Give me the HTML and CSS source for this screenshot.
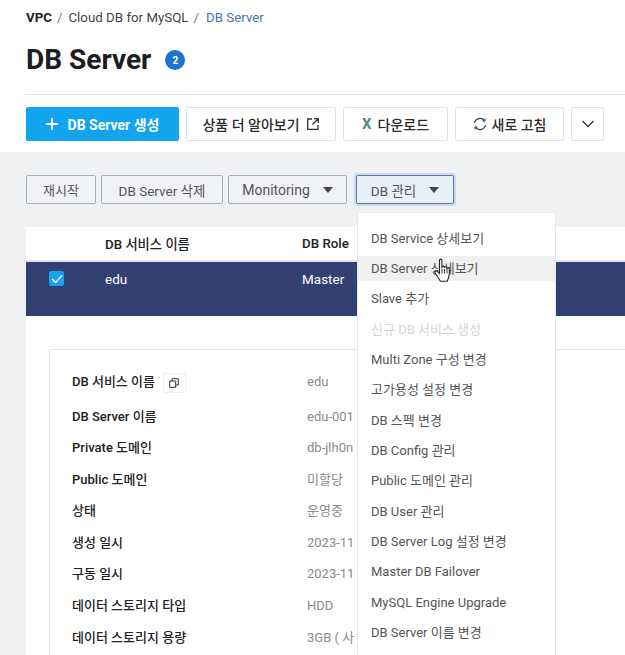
FILE: index.html
```html
<!DOCTYPE html>
<html lang="ko">
<head>
<meta charset="utf-8">
<title>DB Server</title>
<link rel="stylesheet" href="styles.css">
</head>
<body>
<header class="head">
  <nav class="crumbs">
    <b class="crumb-root">VPC</b><span class="sep">/</span><span>Cloud DB for MySQL</span><span class="sep">/</span><span class="crumb-now">DB Server</span>
  </nav>
  <div class="title-row">
    <h1 class="title">DB Server</h1>
    <span class="count">2</span>
  </div>
  <div class="actions">
    <button class="btn primary">
      <svg width="12" height="12" viewBox="0 0 12 12"><path d="M6 0v12M0 6h12" stroke="#fff" stroke-width="1.8" fill="none"/></svg>
      DB Server 생성</button>
    <button class="btn learn">상품 더 알아보기
      <svg width="14" height="14" viewBox="0 0 14 14" fill="none" stroke="#333" stroke-width="1.3"><path d="M6 2H1.700v10.300H12V8M8 1.700h4.300V6M12.200 1.800 6.500 7.500"/></svg>
    </button>
    <button class="btn down"><span class="x-mark">X</span>다운로드</button>
    <button class="btn refresh">
      <svg width="14" height="14" viewBox="0 0 14 14" fill="none" stroke="#333" stroke-width="1.2"><path d="M1.600 6A5.500 5.500 0 0 1 11.400 3.600M12.400 8A5.500 5.500 0 0 1 2.600 10.400"/><path d="M12 1.500v2.600H9.600M2 12.500V9.900h2.400" stroke-width="1"/></svg>
      새로 고침</button>
    <button class="btn more">
      <svg width="14" height="8" viewBox="0 0 14 8" fill="none" stroke="#333" stroke-width="1.3"><path d="M1.500 1 7 6.500 12.500 1"/></svg>
    </button>
  </div>
</header>
<main class="content">
  <div class="tools">
    <button class="tool t-restart">재시작</button>
    <button class="tool t-delete">DB Server 삭제</button>
    <button class="tool t-mon">Monitoring<i class="caret"></i></button>
    <button class="tool t-db">DB 관리<i class="caret"></i></button>
  </div>
  <section class="panel">
    <div class="thead">
      <span></span><span>DB 서비스 이름</span><span>DB Role</span>
    </div>
    <div class="trow">
      <span class="check"><svg width="12" height="10" viewBox="0 0 12 10" fill="none" stroke="#fff" stroke-width="1.400"><path d="M1 5l3.600 3.600L11 1.400"/></svg></span>
      <span>edu</span><span>Master</span>
    </div>
    <div class="detail-wrap">
      <dl class="detail">
        <div class="d-row first"><dt>DB 서비스 이름<span class="copy"><svg width="10" height="10" viewBox="0 0 10 10" fill="none" stroke="#333" stroke-width="1"><path d="M.700 3h6v6.300h-6zM3 3V.700h6.300v6.300H6.700"/></svg></span></dt><dd>edu</dd></div>
        <div class="d-row"><dt>DB Server 이름</dt><dd>edu-001</dd></div>
        <div class="d-row"><dt>Private 도메인</dt><dd>db-jlh0n</dd></div>
        <div class="d-row"><dt>Public 도메인</dt><dd>미할당</dd></div>
        <div class="d-row"><dt>상태</dt><dd>운영중</dd></div>
        <div class="d-row"><dt>생성 일시</dt><dd>2023-11</dd></div>
        <div class="d-row"><dt>구동 일시</dt><dd>2023-11</dd></div>
        <div class="d-row"><dt>데이터 스토리지 타입</dt><dd>HDD</dd></div>
        <div class="d-row"><dt>데이터 스토리지 용량</dt><dd>3GB ( 사</dd></div>
      </dl>
    </div>
  </section>
</main>
<ul class="menu">
  <li>DB Service 상세보기</li>
  <li class="hover">DB Server 상세보기</li>
  <li>Slave 추가</li>
  <li class="off">신규 DB 서비스 생성</li>
  <li>Multi Zone 구성 변경</li>
  <li>고가용성 설정 변경</li>
  <li>DB 스펙 변경</li>
  <li>DB Config 관리</li>
  <li>Public 도메인 관리</li>
  <li>DB User 관리</li>
  <li>DB Server Log 설정 변경</li>
  <li>Master DB Failover</li>
  <li>MySQL Engine Upgrade</li>
  <li>DB Server 이름 변경</li>
</ul>
<svg class="hand" width="18" height="26" viewBox="0 0 18 26"><path d="M5.500 2.200c0-1.500 2.400-1.500 2.400 0V10l.3-1.300c.5-1 2-.8 2.200.3l.1 1 .3-.7c.6-.9 2-.6 2.100.5v1l.4-.5c.7-.6 1.900-.2 2 .8.2 3 .1 6.500-.8 8.700-.5 1.500-1 2.500-1.200 3.400H6.300c-.5-1.800-1.600-3-2.800-4.700L1.200 15c-.8-1.300.8-2.800 2-1.700l2.300 2.200z" fill="#fff" stroke="#222" stroke-width="1.100"/><path d="M8 10.500v5M10.500 11v4.500M13 11.500v4" stroke="#222" stroke-width=".9" fill="none"/></svg>
</body>
</html>
```
FILE: styles.css
```css
* { box-sizing: border-box; }
html, body { margin: 0; height: 655px; overflow: hidden; }
body {
  position: relative;
  font-family: Roboto, "Noto Sans CJK KR", sans-serif;
  color: #222;
  background: #fff;
}
button { font-family: inherit; cursor: pointer; }
.head { padding: 9px 0 0 26px; height: 152px; }
.crumbs { font-size: 13.300px; line-height: 17px; color: #444; display: flex; }
.crumb-root { color: #222; font-weight: 700; }
.sep { margin: 0 6px 0 5px; color: #777; }
.crumb-now { color: #3f74ad; margin-left: 1px; }
.title-row { display: flex; align-items: center; margin-top: 16px; height: 36px; }
.title { font-size: 28px; line-height: 36px; font-weight: 700; margin: 0; color: #1d1d1f; }
.count {
  width: 20px; height: 20px; border-radius: 50%; margin-left: 14px;
  background: #1a75cf; color: #fff; font-size: 10px; font-weight: 700;
  display: flex; align-items: center; justify-content: center;
}
.actions {
  display: flex; margin-top: 16px; padding-top: 12px; gap: 7px;
  border-top: 1px solid #e4e4e6;
}
.btn {
  height: 34px; padding: 0; display: flex; align-items: center; justify-content: center;
  background: #fff; border: 1px solid #e2e3e5; border-radius: 2px;
  font-size: 14px; font-weight: 500; color: #2a2a2a;
}
.primary { width: 153px; background: #13a4ee; border-color: #13a4ee; color: #fff; font-weight: 700; gap: 10px; }
.learn { width: 150px; gap: 6px; }
.down { width: 105px; }
.x-mark { color: #4f8f7a; font-weight: 700; font-size: 15px; margin-right: 6px; }
.refresh { width: 109px; gap: 5px; }
.more { width: 33px; }
.content { background: #f0f1f3; height: 503px; padding: 23px 0 0 26px; }
.tools { display: flex; gap: 5px; }
.tool {
  height: 29px; padding: 0; display: flex; align-items: center; justify-content: center;
  background: #f1f2f5; border: 1px solid #a9adb6; border-radius: 2px;
  font-size: 13.500px; color: #555;
}
.t-restart { width: 70px; font-size: 13px; }
.t-delete { width: 122px; }
.t-mon { width: 119px; font-size: 14px; }
.t-db {
  width: 98px; margin-left: 4px; border-color: #5c7da3;
  background: #e9f0f8; box-shadow: 0 0 0 2px #c9d8ea;
}
.caret {
  width: 0; height: 0; margin-left: 13px;
  border: 5px solid transparent; border-top: 6px solid #444; border-bottom: 0;
}
.panel { margin-top: 23px; background: #fff; height: 428px; }
.thead, .trow { display: grid; grid-template-columns: 79px 197px 1fr; font-size: 13.300px; }
.thead { align-items: center; font-weight: 500; color: #222; border-bottom: 2px solid #dfe3ea; height: 35px; }
.trow {
  height: 54px; background: #324172; color: #fff; font-size: 13.500px;
  padding-top: 8px; line-height: 18px;
}
.check {
  width: 15px; height: 15px; margin: 1px 0 0 23px; border-radius: 2px;
  background: #1c9ff0; display: flex; align-items: center; justify-content: center;
}
.detail-wrap { padding: 33px 0 0 23px; }
.detail {
  margin: 0; height: 310px; padding: 23px 0 0 22px;
  border: 1px solid #e4e4e6; border-right: 0; border-bottom: 0;
}
.d-row { display: grid; grid-template-columns: 235px 1fr; height: 31.600px; align-items: start; font-size: 13px; line-height: 18px; }
.d-row.first { height: 34.500px; }
dt { font-weight: 500; color: #222; display: flex; }
dd { margin: 0; color: #8a8a8a; white-space: nowrap; }
.copy {
  width: 23px; height: 20px; margin-left: 8px; display: flex; align-items: center; justify-content: center;
  border: 1px solid #efefef; border-radius: 2px;
}
.menu {
  position: absolute; left: 357px; top: 212px; width: 199px; height: 443px;
  margin: 0; padding: 10.700px 0 0; list-style: none; background: #fff;
  border: 1px solid #e6e6e8; border-bottom: 0; border-radius: 2px 2px 0 0;
  font-size: 13px; color: #555;
}
.menu li { height: 30.350px; line-height: 30px; padding-left: 13px; }
.menu .hover { background: linear-gradient(transparent 2px, #f0f0f1 2px, #f0f0f1 27px, transparent 27px); }
.menu .off { color: #d5d5d8; }
.hand { position: absolute; left: 434px; top: 258px; }
```
